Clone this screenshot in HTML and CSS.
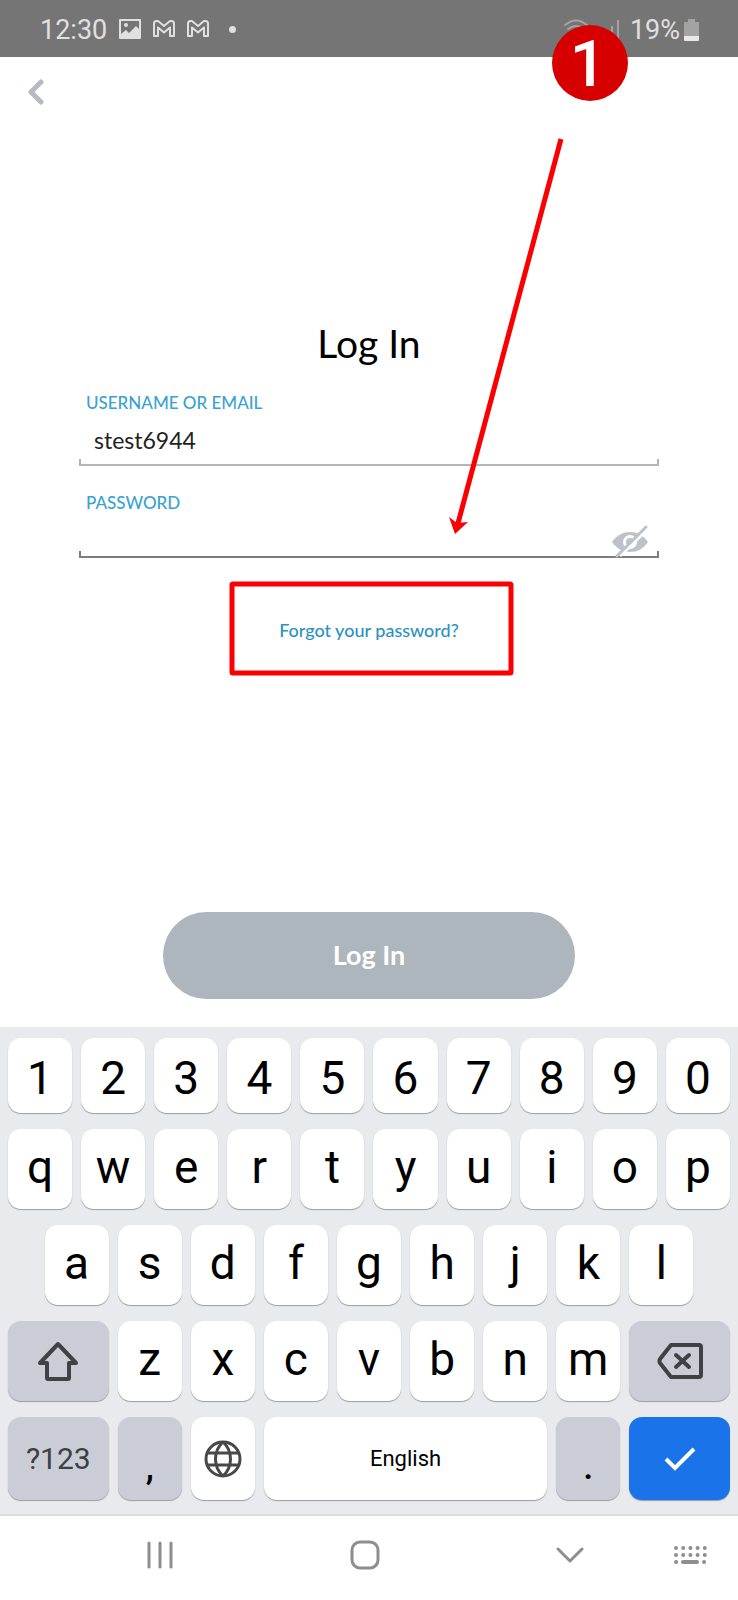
FILE: index.html
```
<!DOCTYPE html>
<html lang="en">
<head>
    <meta charset="UTF-8">
    <meta name="viewport" content="width=device-width, initial-scale=1.0">
    <title>Log In</title>
    <link rel="stylesheet" href="styles.css">
</head>
<body>
    <!-- Status bar -->
    <header class="status-bar">
        <div class="status-left">
            <span>12:30</span>
            <svg width="22" height="20" viewBox="0 0 22 20">
                <path fill="#e0e0e0" fill-rule="evenodd" d="M1 0h20a1 1 0 0 1 1 1v18a1 1 0 0 1-1 1H1a1 1 0 0 1-1-1V1a1 1 0 0 1 1-1zM2 2v13l5-4 3 3 7-7 3 3V2zM7 4a2 2 0 1 1 0 4 2 2 0 0 1 0-4z"/>
            </svg>
            <svg width="22" height="17" viewBox="0 0 22 17">
                <path fill="none" stroke="#e0e0e0" stroke-width="2" stroke-linejoin="round" d="M1 3.500Q1 1 3.500 1L5 1l6 5 6-5h1.500Q21 1 21 3.500V16h-4V7.500l-6 5-6-5V16H1z"/>
            </svg>
            <svg width="22" height="17" viewBox="0 0 22 17">
                <path fill="none" stroke="#e0e0e0" stroke-width="2" stroke-linejoin="round" d="M1 3.500Q1 1 3.500 1L5 1l6 5 6-5h1.500Q21 1 21 3.500V16h-4V7.500l-6 5-6-5V16H1z"/>
            </svg>
            <span class="more-dot"></span>
        </div>
        <div class="status-right">
            <svg width="26" height="22" viewBox="0 0 26 22">
                <path fill="none" stroke="#a3a3a3" stroke-width="2" stroke-linecap="round" d="M2 6q11-9 22 0M5 10q8-6 16 0M9 14q4-3 8 0"/>
            </svg>
            <svg class="signal" width="16" height="20" viewBox="0 0 16 20">
                <path stroke="#a3a3a3" stroke-width="2" d="M3 20v-8M9 20V6M15 20V0"/>
            </svg>
            <span>19%</span>
            <svg width="15" height="22" viewBox="0 0 15 22">
                <path fill="#a3a3a3" d="M4 0h7v3h3a1 1 0 0 1 1 1v13H0V4a1 1 0 0 1 1-1h3z"/>
                <path fill="#e8e8e8" d="M0 17h15v4a1 1 0 0 1-1 1H1a1 1 0 0 1-1-1z"/>
            </svg>
        </div>
    </header>

    <button class="back-button" type="button" aria-label="Back">
        <svg width="16" height="26" viewBox="0 0 16 26">
            <path fill="none" stroke="#b5bbc3" stroke-width="5" stroke-linecap="round" stroke-linejoin="round" d="M13 3L3 13l10 10"/>
        </svg>
    </button>

    <!-- Login form -->
    <form class="login-form">
        <h1>Log In</h1>

        <label for="username">USERNAME OR EMAIL</label>
        <input class="username-input" type="text" id="username" value="stest6944">

        <label for="password">PASSWORD</label>
        <div class="password-row">
            <input class="password-input" type="password" id="password">
            <button class="toggle-password" type="button" aria-label="Show password">
                <svg width="38" height="34" viewBox="0 0 38 34">
                    <path fill="#bcc1ca" d="M1 18C6 11 12 8 19 8s13 3 18 10c-5 7-11 10-18 10S6 25 1 18z"/>
                    <circle cx="19" cy="18" r="7" fill="#fff"/>
                    <circle cx="19" cy="18" r="4" fill="#bcc1ca"/>
                    <path stroke="#fff" stroke-width="3" d="M9 32L38 4"/>
                    <path stroke="#bcc1ca" stroke-width="3" stroke-linecap="round" d="M6 32L35 3"/>
                </svg>
            </button>
        </div>

        <a class="forgot-link" href="#">Forgot your password?</a>

        <button class="login-button" type="button">Log In</button>
    </form>

    <!-- Keyboard -->
    <section class="keyboard">
        <div class="key-row number-row">
            <button>1</button>
            <button>2</button>
            <button>3</button>
            <button>4</button>
            <button>5</button>
            <button>6</button>
            <button>7</button>
            <button>8</button>
            <button>9</button>
            <button>0</button>
        </div>
        <div class="key-row">
            <button>q</button>
            <button>w</button>
            <button>e</button>
            <button>r</button>
            <button>t</button>
            <button>y</button>
            <button>u</button>
            <button>i</button>
            <button>o</button>
            <button>p</button>
        </div>
        <div class="key-row">
            <button class="key-indent">a</button>
            <button>s</button>
            <button>d</button>
            <button>f</button>
            <button>g</button>
            <button>h</button>
            <button>j</button>
            <button>k</button>
            <button>l</button>
        </div>
        <div class="key-row">
            <button class="key-wide key-grey" aria-label="Shift">
                <svg width="42" height="40" viewBox="0 0 42 40">
                    <path fill="none" stroke="#3f4145" stroke-width="4" stroke-linejoin="round" d="M21 3L3 22h7v15q0 1 1 1h20q1 0 1-1V22h7z"/>
                </svg>
            </button>
            <button>z</button>
            <button>x</button>
            <button>c</button>
            <button>v</button>
            <button>b</button>
            <button>n</button>
            <button>m</button>
            <button class="key-wide key-grey" aria-label="Delete">
                <svg width="46" height="36" viewBox="0 0 46 36">
                    <path fill="none" stroke="#3f4145" stroke-width="4" stroke-linejoin="round" d="M14 2h28q2 0 2 2v28q0 2-2 2H14L3 20q-1-2 0-4z"/>
                    <path stroke="#3f4145" stroke-width="4" stroke-linecap="round" d="M19 12l13 12M32 12L19 24"/>
                </svg>
            </button>
        </div>
        <div class="key-row bottom-row">
            <button class="key-wide key-grey key-symbols">?123</button>
            <button class="key-grey key-mark">,</button>
            <button aria-label="Language">
                <svg width="38" height="38" viewBox="0 0 38 38">
                    <g fill="none" stroke="#484848" stroke-width="3">
                        <circle cx="19" cy="19" r="17"/>
                        <path d="M3 13h32M3 25h32M19 2C9 11 9 27 19 36M19 2c10 9 10 25 0 34"/>
                    </g>
                </svg>
            </button>
            <button class="key-space">English</button>
            <button class="key-grey key-mark">.</button>
            <button class="key-wide key-enter" aria-label="Done">
                <svg width="32" height="24" viewBox="0 0 32 24">
                    <path fill="none" stroke="#fff" stroke-width="4" d="M2 12l9 9L30 2"/>
                </svg>
            </button>
        </div>
    </section>

    <!-- Navigation bar -->
    <nav class="nav-bar">
        <button aria-label="Recent apps">
            <svg width="26" height="28" viewBox="0 0 26 28">
                <path stroke="#8e8e8e" stroke-width="3" stroke-linecap="round" d="M2 2v24M13 2v24M24 2v24"/>
            </svg>
        </button>
        <button aria-label="Home">
            <svg width="30" height="30" viewBox="0 0 30 30">
                <rect x="2" y="2" width="26" height="26" rx="8" fill="none" stroke="#8e8e8e" stroke-width="3"/>
            </svg>
        </button>
        <button aria-label="Hide keyboard">
            <svg width="28" height="18" viewBox="0 0 28 18">
                <path fill="none" stroke="#8e8e8e" stroke-width="3" stroke-linecap="round" d="M2 3l12 12L26 3"/>
            </svg>
        </button>
        <button class="switch-keyboard" aria-label="Switch keyboard">
            <svg width="34" height="20" viewBox="0 0 34 20">
                <path stroke="#8e8e8e" stroke-width="4" stroke-linecap="round" stroke-dasharray="0 7.200" d="M3 3h30M3 10h30"/>
                <path stroke="#8e8e8e" stroke-width="4" stroke-linecap="round" d="M3 17h.1M10 17h14M31 17h.1"/>
            </svg>
        </button>
    </nav>

    <!-- Step marker, arrow and highlight -->
    <svg class="annotation" width="738" height="700" viewBox="0 0 738 700">
        <rect x="232" y="584" width="279" height="89" rx="1" fill="none" stroke="#fb0000" stroke-width="5"/>
        <path stroke="#fb0000" stroke-width="5" d="M561 139L457 527"/>
        <path fill="#fb0000" d="M455 534l-6-17 8 6 11-1z"/>
        <circle cx="590" cy="63" r="38" fill="#d60000"/>
        <text class="step-number" x="588" y="86">1</text>
    </svg>
</body>
</html>
```

FILE: styles.css
```
/* General Styles */
* {
    box-sizing: border-box;
}

body {
    font-family: Lato, sans-serif;
    margin: 0;
    min-height: 100vh;
    display: flex;
    flex-direction: column;
    position: relative;
    background: #fff;
    color: #000;
    overflow-x: hidden;
}

button {
    border: none;
    padding: 0;
    background: none;
    font-family: inherit;
    cursor: pointer;
}

svg {
    display: block;
}

/* Status Bar */
.status-bar {
    display: flex;
    justify-content: space-between;
    align-items: center;
    height: 57px;
    padding: 2px 39px 0 40px;
    background: #757575;
    color: #e0e0e0;
    font-family: Roboto, sans-serif;
    font-size: 27px;
}

.status-left {
    display: flex;
    align-items: center;
    gap: 12px;
}

.status-left svg {
    margin-bottom: 2px;
}

.status-right {
    display: flex;
    align-items: center;
    gap: 4px;
}

.status-right .signal {
    margin: 0 7px 0 10px;
}

.more-dot {
    width: 7px;
    height: 7px;
    margin-left: 8px;
    border-radius: 50%;
    background: #e0e0e0;
}

.back-button {
    align-self: flex-start;
    padding: 22px 28px;
}

/* Login Form */
.login-form {
    flex: 1;
    display: flex;
    flex-direction: column;
    padding: 194px 79px 28px;
}

h1 {
    margin: 0 0 28px;
    font-size: 39px;
    line-height: 44px;
    font-weight: normal;
    text-align: center;
}

label {
    padding-left: 7px;
    font-size: 17px;
    line-height: 20px;
    font-weight: 500;
    color: #3aa3d1;
}

.username-input,
.password-input {
    width: 100%;
    border: none;
    outline: none;
    padding: 0 15px;
    font-family: inherit;
    font-size: 23px;
    color: #222;
    /* underline with a short tick at each end */
    background:
        linear-gradient(#b5b5b5, #b5b5b5) left bottom / 100% 2px no-repeat,
        linear-gradient(#b5b5b5, #b5b5b5) left bottom / 2px 7px no-repeat,
        linear-gradient(#b5b5b5, #b5b5b5) right bottom / 2px 7px no-repeat;
}

.username-input {
    height: 53px;
    margin-bottom: 27px;
}

.password-row {
    position: relative;
}

.password-input {
    display: block;
    height: 45px;
    background:
        linear-gradient(#7d7d7d, #7d7d7d) left bottom / 100% 2px no-repeat,
        linear-gradient(#7d7d7d, #7d7d7d) left bottom / 2px 7px no-repeat,
        linear-gradient(#7d7d7d, #7d7d7d) right bottom / 2px 7px no-repeat;
}

.toggle-password {
    position: absolute;
    right: 10px;
    bottom: 0;
}

.forgot-link {
    align-self: center;
    margin-top: 60px;
    font-size: 18px;
    line-height: 24px;
    font-weight: 500;
    color: #2a93c0;
    text-decoration: none;
}

.login-button {
    align-self: center;
    width: 71%;
    height: 87px;
    margin-top: auto;
    padding-bottom: 3px;
    border-radius: 44px;
    background: #adb5bd;
    color: #fff;
    font-size: 27px;
    font-weight: bold;
}

/* Keyboard */
.keyboard {
    display: flex;
    flex-direction: column;
    gap: 16px;
    padding: 11px 8px 14px;
    background: #e8eaed;
    border-bottom: 2px solid #dcdde0;
    font-family: Roboto, sans-serif;
}

.key-row {
    display: grid;
    grid-template-columns: repeat(20, 1fr);
    column-gap: 9px;
    height: 80px;
}

.key-row button {
    grid-column: span 2;
    display: flex;
    justify-content: center;
    align-items: center;
    min-width: 0;
    padding-bottom: 5px;
    border-radius: 13px;
    background: #fff;
    box-shadow: 0 1px 1px #9a9ca0;
    color: #000;
    font-size: 46px;
    line-height: 54px;
}

.key-row.number-row {
    height: 75px;
}

.number-row button {
    padding: 5px 0 0;
}

.key-row.bottom-row {
    height: 83px;
}

.bottom-row button {
    padding: 0;
}

.key-row .key-indent {
    grid-column: 2 / span 2;
}

.key-row .key-wide {
    grid-column: span 3;
    padding: 0;
}

.key-row .key-grey {
    background: #cbcdd6;
}

.key-row .key-symbols {
    font-size: 30px;
    color: #3c4043;
}

.key-row .key-mark {
    padding-top: 16px;
    font-size: 36px;
    font-weight: 500;
}

.key-row .key-space {
    grid-column: span 8;
    font-size: 22px;
}

.key-row .key-enter {
    background: #1a73e8;
}

/* Navigation Bar */
.nav-bar {
    display: flex;
    align-items: center;
    height: 84px;
    padding: 0 31px 6px 57px;
}

.nav-bar button {
    flex: 1;
    display: flex;
    justify-content: center;
}

.nav-bar .switch-keyboard {
    flex: none;
}

/* Annotation */
.annotation {
    position: absolute;
    top: 0;
    left: 50%;
    transform: translateX(-50%);
    pointer-events: none;
}

.step-number {
    font-family: Roboto, sans-serif;
    font-size: 64px;
    font-weight: 500;
    fill: #fff;
    text-anchor: middle;
}
```
